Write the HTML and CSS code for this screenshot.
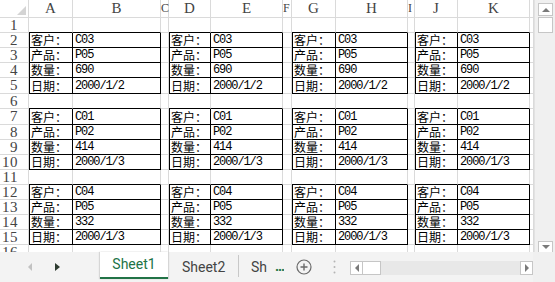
FILE: index.html
```html
<!DOCTYPE html>
<html lang="zh-CN">

<head>
    <meta charset="UTF-8">
    <meta name="viewport" content="width=device-width, initial-scale=1.0">
    <title>Sheet1</title>

    <link rel="stylesheet" href="styles.css">
</head>

<body>
    <div class="app">
        <div class="main">
            <div class="sheet">
                <!-- column headers -->
                <div class="corner"><span class="select-all"></span></div>
                <div class="ch">A</div>
                <div class="ch">B</div>
                <div class="ch narrow">C</div>
                <div class="ch">D</div>
                <div class="ch">E</div>
                <div class="ch narrow">F</div>
                <div class="ch">G</div>
                <div class="ch">H</div>
                <div class="ch narrow">I</div>
                <div class="ch">J</div>
                <div class="ch">K</div>
                <div class="ch"></div>

                <!-- row 1 -->
                <div class="rh">1</div>
                <div class="t"></div><div class="t"></div><div class="c"></div>
                <div class="t"></div><div class="t"></div><div class="c"></div>
                <div class="t"></div><div class="t"></div><div class="c"></div>
                <div class="t"></div><div class="t"></div><div class="c"></div>

                <!-- rows 2-5 -->
                <div class="rh">2</div>
                <div class="k">客户：</div><div class="v">C03</div><div class="c"></div>
                <div class="k">客户：</div><div class="v">C03</div><div class="c"></div>
                <div class="k">客户：</div><div class="v">C03</div><div class="c"></div>
                <div class="k">客户：</div><div class="v">C03</div><div class="c"></div>

                <div class="rh">3</div>
                <div class="k">产品：</div><div class="v">P05</div><div class="c"></div>
                <div class="k">产品：</div><div class="v">P05</div><div class="c"></div>
                <div class="k">产品：</div><div class="v">P05</div><div class="c"></div>
                <div class="k">产品：</div><div class="v">P05</div><div class="c"></div>

                <div class="rh">4</div>
                <div class="k">数量：</div><div class="v">690</div><div class="c"></div>
                <div class="k">数量：</div><div class="v">690</div><div class="c"></div>
                <div class="k">数量：</div><div class="v">690</div><div class="c"></div>
                <div class="k">数量：</div><div class="v">690</div><div class="c"></div>

                <div class="rh">5</div>
                <div class="k">日期：</div><div class="v">2000/1/2</div><div class="c"></div>
                <div class="k">日期：</div><div class="v">2000/1/2</div><div class="c"></div>
                <div class="k">日期：</div><div class="v">2000/1/2</div><div class="c"></div>
                <div class="k">日期：</div><div class="v">2000/1/2</div><div class="c"></div>

                <!-- row 6 -->
                <div class="rh">6</div>
                <div class="t"></div><div class="t"></div><div class="c"></div>
                <div class="t"></div><div class="t"></div><div class="c"></div>
                <div class="t"></div><div class="t"></div><div class="c"></div>
                <div class="t"></div><div class="t"></div><div class="c"></div>

                <!-- rows 7-10 -->
                <div class="rh">7</div>
                <div class="k">客户：</div><div class="v">C01</div><div class="c"></div>
                <div class="k">客户：</div><div class="v">C01</div><div class="c"></div>
                <div class="k">客户：</div><div class="v">C01</div><div class="c"></div>
                <div class="k">客户：</div><div class="v">C01</div><div class="c"></div>

                <div class="rh">8</div>
                <div class="k">产品：</div><div class="v">P02</div><div class="c"></div>
                <div class="k">产品：</div><div class="v">P02</div><div class="c"></div>
                <div class="k">产品：</div><div class="v">P02</div><div class="c"></div>
                <div class="k">产品：</div><div class="v">P02</div><div class="c"></div>

                <div class="rh">9</div>
                <div class="k">数量：</div><div class="v">414</div><div class="c"></div>
                <div class="k">数量：</div><div class="v">414</div><div class="c"></div>
                <div class="k">数量：</div><div class="v">414</div><div class="c"></div>
                <div class="k">数量：</div><div class="v">414</div><div class="c"></div>

                <div class="rh">10</div>
                <div class="k">日期：</div><div class="v">2000/1/3</div><div class="c"></div>
                <div class="k">日期：</div><div class="v">2000/1/3</div><div class="c"></div>
                <div class="k">日期：</div><div class="v">2000/1/3</div><div class="c"></div>
                <div class="k">日期：</div><div class="v">2000/1/3</div><div class="c"></div>

                <!-- row 11 -->
                <div class="rh">11</div>
                <div class="t"></div><div class="t"></div><div class="c"></div>
                <div class="t"></div><div class="t"></div><div class="c"></div>
                <div class="t"></div><div class="t"></div><div class="c"></div>
                <div class="t"></div><div class="t"></div><div class="c"></div>

                <!-- rows 12-15 -->
                <div class="rh">12</div>
                <div class="k">客户：</div><div class="v">C04</div><div class="c"></div>
                <div class="k">客户：</div><div class="v">C04</div><div class="c"></div>
                <div class="k">客户：</div><div class="v">C04</div><div class="c"></div>
                <div class="k">客户：</div><div class="v">C04</div><div class="c"></div>

                <div class="rh">13</div>
                <div class="k">产品：</div><div class="v">P05</div><div class="c"></div>
                <div class="k">产品：</div><div class="v">P05</div><div class="c"></div>
                <div class="k">产品：</div><div class="v">P05</div><div class="c"></div>
                <div class="k">产品：</div><div class="v">P05</div><div class="c"></div>

                <div class="rh">14</div>
                <div class="k">数量：</div><div class="v">332</div><div class="c"></div>
                <div class="k">数量：</div><div class="v">332</div><div class="c"></div>
                <div class="k">数量：</div><div class="v">332</div><div class="c"></div>
                <div class="k">数量：</div><div class="v">332</div><div class="c"></div>

                <div class="rh">15</div>
                <div class="k">日期：</div><div class="v">2000/1/3</div><div class="c"></div>
                <div class="k">日期：</div><div class="v">2000/1/3</div><div class="c"></div>
                <div class="k">日期：</div><div class="v">2000/1/3</div><div class="c"></div>
                <div class="k">日期：</div><div class="v">2000/1/3</div><div class="c"></div>

                <!-- row 16 -->
                <div class="rh">16</div>
                <div class="c"></div><div class="c"></div><div class="c"></div>
                <div class="c"></div><div class="c"></div><div class="c"></div>
                <div class="c"></div><div class="c"></div><div class="c"></div>
                <div class="c"></div><div class="c"></div><div class="c"></div>
            </div>

            <div class="vscroll">
                <div class="sbtn"><span class="tri-up"></span></div>
                <div class="vthumb"></div>
                <div class="vtrack"></div>
                <div class="sbtn down"><span class="tri-down"></span></div>
            </div>
        </div>

        <div class="tabbar">
            <div class="nav">
                <span class="nav-prev"></span>
                <span class="nav-next"></span>
            </div>
            <div class="tab active">Sheet1</div>
            <div class="tab">Sheet2</div>
            <div class="sep"></div>
            <div class="tab cut">Sh</div>
            <div class="more">...</div>
            <div class="add">
                <svg width="16" height="16" viewBox="0 0 16 16">
                    <circle cx="8" cy="8" r="7" fill="none" stroke="#6a6a6a" stroke-width="1.2" />
                    <path d="M8 4.5v7M4.5 8h7" stroke="#6a6a6a" stroke-width="1.4" />
                </svg>
            </div>
            <div class="grip">
                <svg width="3" height="14" viewBox="0 0 3 14">
                    <circle cx="1.5" cy="1.5" r="1" fill="#b4b4b4" />
                    <circle cx="1.5" cy="7" r="1" fill="#b4b4b4" />
                    <circle cx="1.5" cy="12.5" r="1" fill="#b4b4b4" />
                </svg>
            </div>
            <div class="hscroll">
                <div class="hbtn"><span class="tri-left"></span></div>
                <div class="hthumb"></div>
                <div class="htrack"></div>
                <div class="hbtn"><span class="tri-right"></span></div>
            </div>
            <div class="fill"></div>
        </div>
    </div>
</body>

</html>
```

FILE: styles.css
```css
* {
    box-sizing: border-box;
}

body {
    margin: 0;
    background: #fff;
}

.app {
    width: 555px;
    height: 282px;
    display: flex;
    flex-direction: column;
    overflow: hidden;
}

.main {
    display: flex;
    height: 252px;
}

/* grid of cells */
.sheet {
    width: 534px;
    height: 252px;
    overflow: hidden;
    display: grid;
    grid-template-columns: 29px 44px 88px 8px 42px 72px 9px 44px 72px 7px 43px 72px 4px;
    grid-template-rows: 18px repeat(4, 15px) 16px 15px 16px repeat(8, 15px) 1fr;
    background: #fff;
}

.sheet > div {
    border-right: 1px solid #dadada;
    border-bottom: 1px solid #dadada;
    white-space: nowrap;
}

.corner {
    display: flex;
    justify-content: flex-end;
    align-items: flex-end;
    padding: 0 2px 2px 0;
}

.select-all {
    width: 0;
    height: 0;
    border-left: 9px solid transparent;
    border-bottom: 9px solid #d4d4d4;
}

.ch {
    font-family: "Liberation Serif", serif;
    font-size: 15px;
    line-height: 17px;
    color: #444;
    text-align: center;
}

.ch.narrow {
    font-size: 12px;
    text-align: left;
    padding-left: 0;
    overflow: visible;
}

.rh {
    font-family: "Liberation Serif", serif;
    font-size: 15px;
    line-height: 14px;
    color: #444;
    text-align: right;
    padding-right: 10px;
    letter-spacing: 0.5px;
}

.t {
    border-bottom-color: #000 !important;
}

.k,
.v {
    border-right-color: #000 !important;
    border-bottom-color: #000 !important;
    display: flex;
    align-items: flex-end;
    color: #000;
}

.k {
    border-left: 1px solid #000;
    padding-left: 1px;
    font-family: "Noto Sans CJK SC", sans-serif;
    font-size: 12px;
    line-height: 14px;
}

.v {
    padding-left: 2px;
    font-family: "Liberation Mono", monospace;
    font-size: 12px;
    line-height: 13px;
    letter-spacing: -1.1px;
}

/* vertical scrollbar */
.vscroll {
    width: 21px;
    height: 252px;
    background: #f0f0f0;
    border-left: 1px solid #e2e2e2;
    display: flex;
    flex-direction: column;
    padding: 3px 2px 0 3px;
}

.sbtn {
    height: 13px;
    background: #fff;
    border: 1px solid #c6c6c6;
    display: flex;
    align-items: center;
    justify-content: center;
}

.sbtn.down {
    height: 11px;
    border-bottom: none;
}

.tri-up {
    border-left: 4px solid transparent;
    border-right: 4px solid transparent;
    border-bottom: 4px solid #7a7a7a;
}

.tri-down {
    border-left: 4px solid transparent;
    border-right: 4px solid transparent;
    border-top: 4px solid #7a7a7a;
}

.vthumb {
    height: 16px;
    margin-top: 1px;
    background: #fff;
    border: 1px solid #c6c6c6;
}

.vtrack {
    flex: 1;
}

/* sheet tabs */
.tabbar {
    height: 30px;
    display: flex;
    background: #f3f3f3;
    font-family: Roboto, "Liberation Sans", sans-serif;
    font-size: 14px;
    color: #444;
}

.nav {
    width: 100px;
    display: flex;
    align-items: center;
    padding-left: 28px;
}

.nav-prev {
    border-top: 4px solid transparent;
    border-bottom: 4px solid transparent;
    border-right: 4px solid #c2c2c2;
}

.nav-next {
    margin-left: 23px;
    border-top: 4px solid transparent;
    border-bottom: 4px solid transparent;
    border-left: 5px solid #2e3b30;
}

.tab {
    width: 70px;
    padding-left: 14px;
    line-height: 30px;
    white-space: nowrap;
}

.tab.active {
    width: 68px;
    padding-left: 0;
    text-align: center;
    line-height: 25px;
    height: 27px;
    background: #fff;
    color: #217346;
    border-bottom: 2px solid #217346;
    box-shadow: -1px 0 1px #d6d6d6, 1px 0 1px #d6d6d6;
}

.sep {
    width: 1px;
    height: 22px;
    margin-top: 3px;
    background: #c8c8c8;
}

.tab.cut {
    width: 16px;
    padding-left: 0;
    margin-left: 12px;
    overflow: hidden;
}

.more {
    width: 9px;
    margin-left: 8px;
    line-height: 28px;
    color: #217346;
    font-weight: bold;
    letter-spacing: -1px;
    overflow: hidden;
}

.add {
    width: 16px;
    margin-left: 12px;
    display: flex;
    align-items: center;
}

.grip {
    width: 3px;
    margin-left: 21px;
    display: flex;
    align-items: center;
}

/* horizontal scrollbar */
.hscroll {
    width: 183px;
    margin-left: 14px;
    height: 14px;
    margin-top: 9px;
    display: flex;
    background: #e8e8e8;
}

.hbtn {
    width: 13px;
    background: #fff;
    border: 1px solid #c6c6c6;
    display: flex;
    align-items: center;
    justify-content: center;
}

.tri-left {
    border-top: 4px solid transparent;
    border-bottom: 4px solid transparent;
    border-right: 4px solid #7a7a7a;
}

.tri-right {
    border-top: 4px solid transparent;
    border-bottom: 4px solid transparent;
    border-left: 4px solid #7a7a7a;
}

.hthumb {
    width: 18px;
    background: #fff;
    border: 1px solid #c6c6c6;
    border-left: none;
}

.htrack {
    flex: 1;
}

.fill {
    flex: 1;
    background: #f0f0f0;
}
```
